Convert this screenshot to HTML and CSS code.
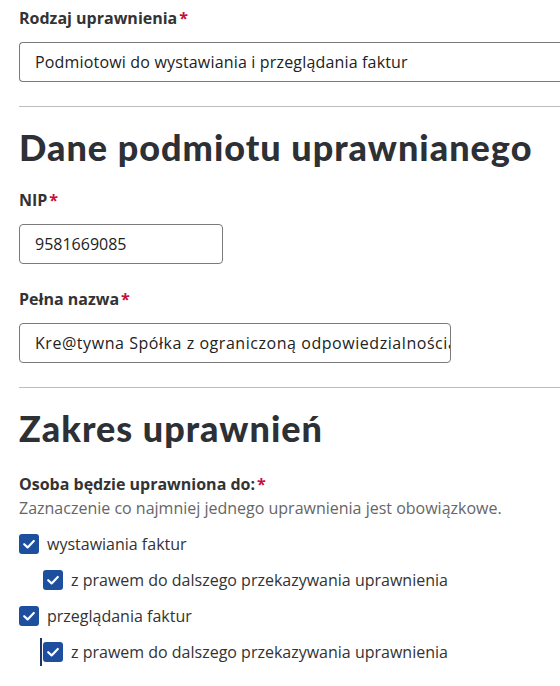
FILE: index.html
```html
<!DOCTYPE html>
<html lang="pl">
<head>
<meta charset="utf-8">
<link rel="stylesheet" href="styles.css">
</head>
<body>
<div class="page">
  <div class="field field-first">
    <div class="label">Rodzaj uprawnienia<span class="req">*</span></div>
    <div class="input input-wide">Podmiotowi do wystawiania i przeglądania faktur</div>
  </div>
  <hr class="sep">
  <h2 class="heading">Dane podmiotu uprawnianego</h2>
  <div class="field">
    <div class="label">NIP<span class="req">*</span></div>
    <div class="input input-nip">9581669085</div>
  </div>
  <div class="field field-next">
    <div class="label">Pełna nazwa<span class="req">*</span></div>
    <div class="input input-name">Kre@tywna Spółka z ograniczoną odpowiedzialnością</div>
  </div>
  <hr class="sep">
  <h2 class="heading">Zakres uprawnień</h2>
  <div class="group">
    <div class="label">Osoba będzie uprawniona do:<span class="req">*</span></div>
    <div class="hint">Zaznaczenie co najmniej jednego uprawnienia jest obowiązkowe.</div>
    <div class="checks">
      <div class="check">
        <span class="box"><svg viewBox="0 0 20 20" width="20" height="20"><path d="M5.2 10.2 L8.6 13.4 L14.8 7" fill="none" stroke="#fff" stroke-width="2.2" stroke-linecap="round" stroke-linejoin="round"/></svg></span>
        <span>wystawiania faktur</span>
      </div>
      <div class="check nested">
        <span class="box"><svg viewBox="0 0 20 20" width="20" height="20"><path d="M5.2 10.2 L8.6 13.4 L14.8 7" fill="none" stroke="#fff" stroke-width="2.2" stroke-linecap="round" stroke-linejoin="round"/></svg></span>
        <span>z prawem do dalszego przekazywania uprawnienia</span>
      </div>
      <div class="check">
        <span class="box"><svg viewBox="0 0 20 20" width="20" height="20"><path d="M5.2 10.2 L8.6 13.4 L14.8 7" fill="none" stroke="#fff" stroke-width="2.2" stroke-linecap="round" stroke-linejoin="round"/></svg></span>
        <span>przeglądania faktur</span>
      </div>
      <div class="check nested focused">
        <span class="box"><svg viewBox="0 0 20 20" width="20" height="20"><path d="M5.2 10.2 L8.6 13.4 L14.8 7" fill="none" stroke="#fff" stroke-width="2.2" stroke-linecap="round" stroke-linejoin="round"/></svg></span>
        <span>z prawem do dalszego przekazywania uprawnienia</span>
      </div>
    </div>
  </div>
</div>
</body>
</html>
```
FILE: styles.css
```css
html, body {
  margin: 0;
  padding: 0;
  background: #fff;
  overflow: hidden;
}
body {
  font-family: "Open Sans", "Liberation Sans", sans-serif;
  color: #333;
  font-size: 16px;
}
.page {
  width: 541px;
  padding: 6px 0 0 19px;
}
.field {
  display: flex;
  flex-direction: column;
  gap: 12px;
}
.field-next {
  margin-top: 23px;
}
.label {
  font-weight: 700;
  font-size: 16px;
  line-height: 24px;
  color: #333;
}
.req {
  color: #c4103c;
  margin-left: 2px;
}
.input {
  box-sizing: border-box;
  height: 40px;
  border: 1px solid #7a7a7a;
  border-radius: 4px;
  padding: 0 15px;
  font-size: 16px;
  line-height: 38px;
  color: #222;
  white-space: nowrap;
  overflow: hidden;
}
.input-wide {
  width: 560px;
  margin-right: -19px;
  letter-spacing: 0.17px;
  border-right: 0;
  border-radius: 4px 0 0 4px;
}
.input-nip { width: 204px; }
.input-name {
  width: 432px;
  padding-right: 0;
  letter-spacing: 0.55px;
}
.sep {
  margin: 24px -19px 0 0;
  border: 0;
  border-top: 1px solid #bdbdbd;
}
.heading {
  margin: 20px 0 21px;
  font-family: "Lato", "Liberation Sans", sans-serif;
  font-weight: 900;
  font-size: 36px;
  line-height: 40px;
  color: #2d3035;
  letter-spacing: 1px;
  white-space: nowrap;
}
.group { padding-top: 3px; }
.hint {
  font-size: 16px;
  line-height: 24px;
  color: #666;
}
.checks {
  margin-top: 12px;
  display: flex;
  flex-direction: column;
  gap: 12px;
}
.check {
  display: flex;
  align-items: center;
  gap: 8px;
  line-height: 24px;
  font-size: 16px;
  color: #333;
}
.box {
  width: 20px;
  height: 20px;
  border-radius: 3px;
  background: #1d4f9e;
  display: flex;
  flex: none;
}
.nested {
  margin-left: 21px;
  border-left: 2px solid transparent;
  padding-left: 1px;
}
.focused {
  border-left-color: #1d3561;
  padding-top: 2px;
  padding-bottom: 2px;
  margin-top: -2px;
}
```
